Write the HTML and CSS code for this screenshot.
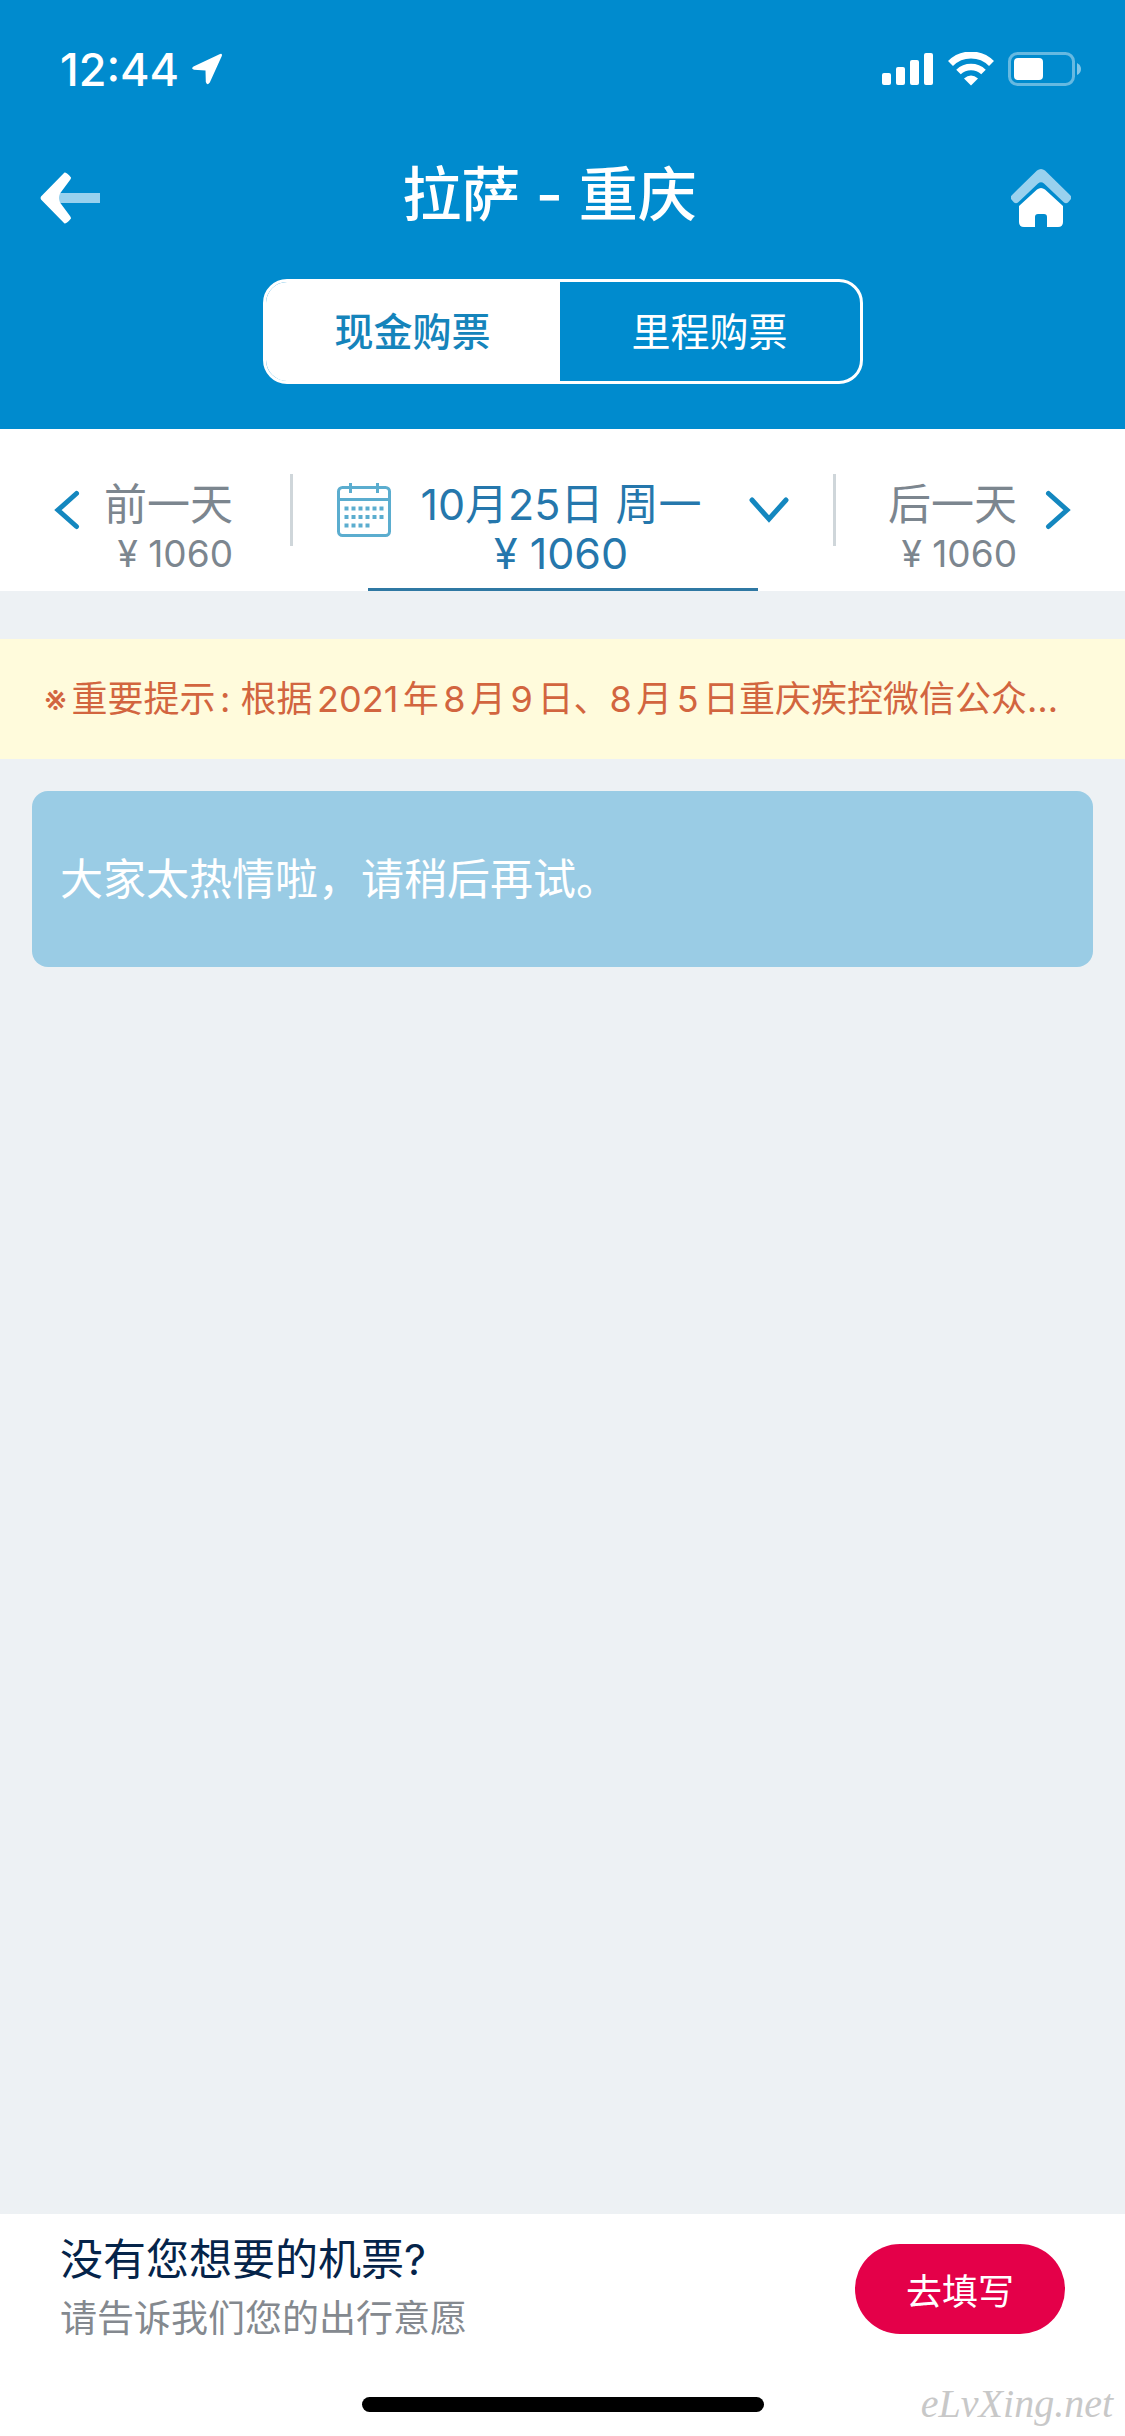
FILE: index.html
```html
<!DOCTYPE html>
<html lang="zh-CN">
<head>
  <meta charset="UTF-8">
  <meta name="viewport" content="width=device-width">
  <title>拉萨 - 重庆</title>
  <link rel="stylesheet" href="styles.css">
</head>
<body>

<!-- Header -->
<header class="header">
  <div class="status-bar">
    <div class="status-left">
      <span class="time">12:44</span>
      <svg width="32" height="32" viewBox="0 0 32 32" aria-hidden="true">
        <path d="M2.500 13.500L28.500 1.200Q31.600 0 30.800 3L18.800 29.500Q16 33 14.800 29L14.500 17.500L3 16.800Q-.5 15.500 2.500 13.500Z" fill="#fff"/>
      </svg>
    </div>
    <div class="status-right">
      <svg width="52" height="34" viewBox="0 0 52 34" fill="#fff" aria-hidden="true">
        <rect x="0" y="21" width="9" height="12" rx="2"/>
        <rect x="14" y="15" width="9" height="18" rx="2"/>
        <rect x="28" y="8" width="9" height="25" rx="2"/>
        <rect x="42" y="1" width="9" height="32" rx="2"/>
      </svg>
      <svg width="46" height="34" viewBox="0 0 46 34" aria-hidden="true">
        <path d="M2.500 11.500A29 29 0 0 1 43.500 11.500" fill="none" stroke="#fff" stroke-width="7"/>
        <path d="M10.500 20A18 18 0 0 1 35.500 20" fill="none" stroke="#fff" stroke-width="6.500"/>
        <path d="M16 26.500Q23 20.500 30 26.500L23 33.500Z" fill="#fff"/>
      </svg>
      <svg width="74" height="34" viewBox="0 0 74 34" aria-hidden="true">
        <rect x="1.500" y="1.500" width="64" height="31" rx="8" fill="none" stroke="#fff" stroke-opacity=".4" stroke-width="3"/>
        <rect x="6" y="6" width="29" height="22" rx="4" fill="#fff"/>
        <path d="M69 11Q73 13 73 17T69 23Z" fill="#fff" fill-opacity=".5"/>
      </svg>
    </div>
  </div>

  <nav class="nav-bar">
    <button class="icon-btn" type="button" aria-label="返回">
      <svg width="60" height="52" viewBox="0 0 60 52">
        <rect x="18" y="21" width="42" height="10" fill="#99d1ee"/>
        <path d="M24.500 .5L1 24.500Q0 26 1 27.500L24.500 51.500Q27 51.500 31 46.500Q31 45 30 44L20 30.500Q18 26 20 21.500L30 8Q31 7 31 5.500Q27 .5 24.500 .5Z" fill="#fff"/>
      </svg>
    </button>
    <h1 class="title">拉萨 - 重庆</h1>
    <button class="icon-btn" type="button" aria-label="首页">
      <svg width="60" height="58" viewBox="0 0 60 58">
        <path d="M0 30Q-1 28 1 26L26 1.500Q30-1.500 34 1.500L59 26Q61 28 60 30L57 33.500Q55 35 53 33.500L33 14.500Q30 12 27 14.500L7 33.500Q5 35 3 33.500Z" fill="#99d1ee"/>
        <path d="M8 37L26 20.500Q30 17.500 34 20.500L52 37V53Q52 58 47 58H36V48Q36 45 33 45H27Q24 45 24 48V58H13Q8 58 8 53Z" fill="#fff"/>
      </svg>
    </button>
  </nav>

  <div class="segment">
    <button class="segment-item active" type="button">现金购票</button>
    <button class="segment-item" type="button">里程购票</button>
  </div>
</header>

<!-- Date switcher -->
<section class="date-bar">
  <button class="day day-prev" type="button">
    <svg class="arrow" width="26" height="40" viewBox="0 0 26 40" aria-hidden="true"><path d="M22.500 3.500L4 20L22.500 36.500"/></svg>
    <span class="day-text">
      <span class="day-name">前一天</span>
      <span class="day-price">¥ 1060</span>
    </span>
  </button>
  <span class="divider"></span>
  <button class="day day-current" type="button">
    <svg class="calendar" width="54" height="54" viewBox="0 0 54 54" aria-hidden="true">
      <rect x="1.500" y="4.500" width="51" height="48" rx="4" fill="none" stroke="#5badcf" stroke-width="3"/>
      <path d="M2 16.500H52M13.500 0V10M40.500 0V10" stroke="#5badcf" stroke-width="3"/>
      <path d="M7.500 25.500H47M7.500 34H47M7.500 42.500H33" stroke="#5badcf" stroke-width="4" stroke-dasharray="4 3"/>
    </svg>
    <span class="day-text">
      <span class="day-name">10月25日 周一</span>
      <span class="day-price">¥ 1060</span>
    </span>
    <svg class="arrow arrow-down" width="40" height="40" viewBox="0 0 40 40" aria-hidden="true"><path d="M3 10L20 29L37 10"/></svg>
  </button>
  <span class="divider"></span>
  <button class="day day-next" type="button">
    <span class="day-text">
      <span class="day-name">后一天</span>
      <span class="day-price">¥ 1060</span>
    </span>
    <svg class="arrow" width="26" height="40" viewBox="0 0 26 40" aria-hidden="true"><path d="M3.500 3.500L22 20L3.500 36.500"/></svg>
  </button>
</section>

<main class="content">
  <p class="notice">※重要提示: 根据2021年8月9日、8月5日重庆疾控微信公众…</p>
  <div class="message">大家太热情啦，请稍后再试。</div>
</main>

<!-- Footer -->
<footer class="footer">
  <div class="wish">
    <div>
      <p class="wish-title">没有您想要的机票?</p>
      <p class="wish-desc">请告诉我们您的出行意愿</p>
    </div>
    <button class="wish-btn" type="button">去填写</button>
  </div>
  <div class="home-indicator"></div>
  <span class="watermark">eLvXing.net</span>
</footer>

</body>
</html>
```
FILE: styles.css
```css
* {
  box-sizing: border-box;
}
body {
  margin: 0;
  min-height: 100vh;
  display: flex;
  flex-direction: column;
  background-color: #edf1f4;
  font-family: Inter, "Noto Sans CJK SC", sans-serif;
  font-size: 43px;
}
button {
  padding: 0;
  border: none;
  background: none;
  color: inherit;
  font: inherit;
  cursor: pointer;
}
h1,
p {
  margin: 0;
}
svg {
  display: block;
  flex: none;
}

/* Header */
.header {
  background-color: #008bce;
  color: #fff;
  padding-bottom: 45px;
}
.status-bar {
  height: 138px;
  padding: 0 43px 0 60px;
  display: flex;
  align-items: center;
  justify-content: space-between;
}
.status-left {
  display: flex;
  align-items: center;
  gap: 12px;
}
.status-right {
  display: flex;
  align-items: center;
  gap: 14px;
}
.time {
  font-size: 45px;
  font-weight: 500;
}
.nav-bar {
  height: 120px;
  padding: 0 54px 0 40px;
  display: flex;
  align-items: center;
  justify-content: space-between;
}
.title {
  padding: 0 12px 6px 0;
  font-size: 59px;
  font-weight: 500;
  line-height: 90px;
}
.segment {
  width: 600px;
  max-width: 90%;
  height: 105px;
  margin: 21px auto 0;
  display: grid;
  grid-template-columns: 49fr 50fr;
  border: 3px solid #fff;
  border-radius: 24px;
  overflow: hidden;
}
.segment-item {
  padding-bottom: 6px;
  font-size: 39px;
}
.segment-item.active {
  background-color: #fff;
  color: #1584bb;
  font-weight: 500;
}

/* Date switcher */
.date-bar {
  display: grid;
  grid-template-columns: 1fr 3px minmax(0, 540px) 3px 1fr;
  background-color: #fff;
  color: #7c868f;
}
.divider {
  height: 72px;
  margin-top: 45px;
  background-color: #cfd6da;
}
.day {
  padding-top: 51px;
  display: flex;
  align-items: flex-start;
}
.day-prev {
  padding-left: 54px;
  gap: 24px;
}
.day-next {
  padding-right: 54px;
  justify-content: flex-end;
  gap: 28px;
}
.day-text {
  display: flex;
  flex-direction: column;
  align-items: flex-end;
  line-height: 49px;
  white-space: nowrap;
}
.day-price {
  font-size: 37px;
}
.day-current {
  position: relative;
  padding: 51px 44px 13px;
  gap: 30px;
  color: #2577ac;
}
.day-current .day-text {
  align-items: center;
}
.day-current .day-price {
  font-size: 43px;
}
.day-current::after {
  content: "";
  position: absolute;
  left: 50%;
  bottom: 0;
  width: 390px;
  height: 3px;
  margin-left: -195px;
  background-color: #2f78a3;
}
.calendar {
  margin-top: 3px;
}
.arrow {
  margin-top: 10px;
  fill: none;
  stroke: #1487bf;
  stroke-width: 5;
  stroke-linecap: round;
}
.arrow-down {
  margin-left: auto;
}

/* Content */
.content {
  flex: 1;
  padding-top: 48px;
}
.notice {
  padding: 0 44px;
  background-color: #fffbdc;
  color: #d2653f;
  font-size: 36px;
  line-height: 120px;
  text-autospace: normal;
  white-space: nowrap;
  overflow: hidden;
  text-overflow: ellipsis;
}
.message {
  margin: 32px 32px 0;
  padding: 0 28px;
  background-color: #9acce5;
  border-radius: 16px;
  color: #fff;
  line-height: 176px;
}

/* Footer */
.footer {
  position: relative;
  padding: 15px 60px 24px;
  background-color: #fff;
}
.wish {
  display: flex;
  align-items: center;
  justify-content: space-between;
}
.wish-title {
  color: #05244a;
  line-height: 60px;
}
.wish-desc {
  color: #84898f;
  font-size: 37px;
  line-height: 60px;
}
.wish-btn {
  width: 210px;
  height: 90px;
  border-radius: 45px;
  background-color: #e40049;
  color: #fff;
  font-size: 36px;
}
.home-indicator {
  width: 402px;
  height: 15px;
  margin: 48px auto 0;
  border-radius: 8px;
  background-color: #000;
}
.watermark {
  position: absolute;
  right: 12px;
  bottom: 8px;
  color: #c8c8c8;
  font-family: "Liberation Serif", cursive;
  font-size: 40px;
  font-style: italic;
  line-height: 49px;
}
```
